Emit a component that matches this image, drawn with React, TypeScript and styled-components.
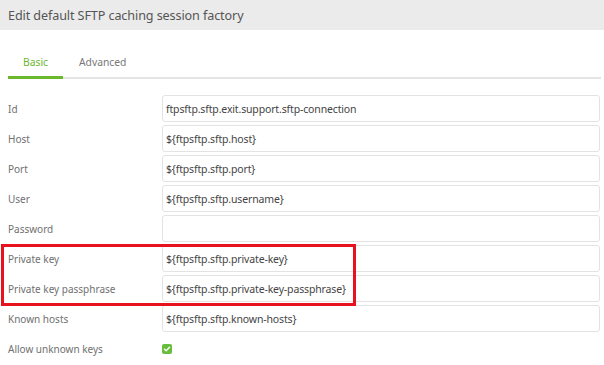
import React from "react";
import styled, { createGlobalStyle } from "styled-components";

const Global = createGlobalStyle`
  html, body { margin: 0; padding: 0; background: #fff; }
  body { font-family: "Noto Sans", "Open Sans", sans-serif; }
`;

const Page = styled.div`
  position: relative;
  width: 604px;
  height: 365px;
  overflow: hidden;
  background: #fff;
`;

const Header = styled.div`
  height: 30px;
  background: #ebebeb;
  display: flex;
  align-items: center;
  padding-left: 8px;
  font-size: 12.6px;
  color: #555;
  letter-spacing: -0.1px;
`;

const TabBar = styled.div`
  margin: 24px 3px 0 8px;
  display: flex;
  border-bottom: 2px solid #e4e4e4;
`;

const Tab = styled.div<{ $active?: boolean }>`
  width: ${(p) => (p.$active ? "55px" : "auto")};
  padding: ${(p) => (p.$active ? "0" : "0 0 0 16px")};
  text-align: ${(p) => (p.$active ? "center" : "left")};
  height: 25px;
  font-size: 10.3px;
  color: ${(p) => (p.$active ? "#6ab82e" : "#777")};
  margin-bottom: -2px;
  border-bottom: 3px solid ${(p) => (p.$active ? "#6ab82e" : "transparent")};
  box-sizing: border-box;
  line-height: 16px;
`;

const Form = styled.div`
  margin: 16px 4px 0 8px;
  display: flex;
  flex-direction: column;
  gap: 3px;
`;

const Row = styled.div`
  display: grid;
  grid-template-columns: 154px 1fr;
  align-items: center;
  height: 27px;
`;

const Label = styled.div`
  font-size: 10px;
  color: #707070;
`;

const Input = styled.div`
  height: 27px;
  box-sizing: border-box;
  border: 1px solid #e3e3e3;
  border-radius: 3px;
  padding-left: 3px;
  display: flex;
  align-items: center;
  font-size: 10.5px;
  color: #444;
  letter-spacing: -0.15px;
`;

const Check = styled.div`
  width: 10px;
  height: 10px;
  border-radius: 2px;
  background: #67bd3c;
  display: flex;
  align-items: center;
  justify-content: center;
`;

const Highlight = styled.div`
  position: absolute;
  left: 1px;
  top: 244px;
  width: 355px;
  height: 62px;
  box-sizing: border-box;
  border: 3px solid #e8121f;
  pointer-events: none;
`;

const fields: [string, string][] = [
  ["Id", "ftpsftp.sftp.exit.support.sftp-connection"],
  ["Host", "${ftpsftp.sftp.host}"],
  ["Port", "${ftpsftp.sftp.port}"],
  ["User", "${ftpsftp.sftp.username}"],
  ["Password", ""],
  ["Private key", "${ftpsftp.sftp.private-key}"],
  ["Private key passphrase", "${ftpsftp.sftp.private-key-passphrase}"],
  ["Known hosts", "${ftpsftp.sftp.known-hosts}"],
];

export default function App() {
  return (
    <Page>
      <Global />
      <Header>Edit default SFTP caching session factory</Header>
      <TabBar>
        <Tab $active>Basic</Tab>
        <Tab>Advanced</Tab>
      </TabBar>
      <Form>
        {fields.map(([l, v]) => (
          <Row key={l}>
            <Label>{l}</Label>
            <Input>{v}</Input>
          </Row>
        ))}
        <Row>
          <Label>Allow unknown keys</Label>
          <Check>
            <svg width="8" height="8" viewBox="0 0 8 8">
              <path d="M1.5 4.2 L3.2 5.8 L6.5 2.3" stroke="#fff" strokeWidth="1.4" fill="none" strokeLinecap="round" strokeLinejoin="round" />
            </svg>
          </Check>
        </Row>
      </Form>
      <Highlight />
    </Page>
  );
}
